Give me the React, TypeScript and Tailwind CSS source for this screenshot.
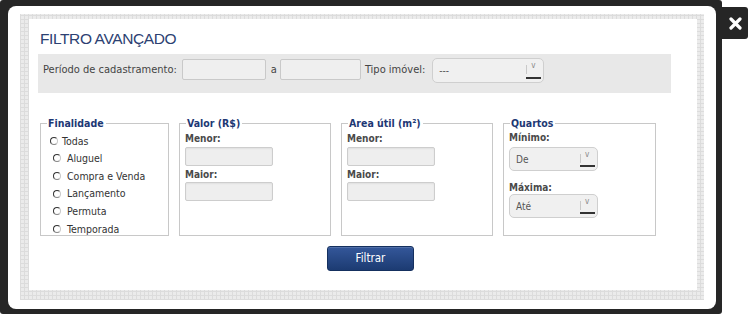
import React from "react";

const F = "font-['DejaVu_Sans_Condensed','DejaVu_Sans',sans-serif]";

function Input({ w }: { w: string }) {
  return (
    <div
      className={`${w} h-[19px] bg-[#eeeeee] border border-[#cdcdcd] rounded-[2px] shadow-[inset_0_1px_2px_rgba(0,0,0,0.06)]`}
    />
  );
}

function Select({ label, w, h }: { label: string; w: string; h: string }) {
  return (
    <div
      className={`${w} ${h} relative bg-[#f0f0f0] border border-[#cfcfcf] rounded-[5px] flex items-center pl-[6px] text-[10px] text-[#555] ${F}`}
    >
      <span>{label}</span>
      <div className="absolute right-[2px] top-0 bottom-0 w-[15px]">
        <span className="absolute left-[0px] top-[6px] h-[9px] w-px bg-[#c9c9c9]" />
        <span className="absolute left-[5px] top-[3px] text-[8px] text-[#888] leading-none">v</span>
        <span className="absolute left-0 right-0 bottom-[3px] h-[2px] bg-[#333]" />
      </div>
    </div>
  );
}

function Radio({ label, first }: { label: string; first?: boolean }) {
  return (
    <div className={`h-[17.6px] flex items-center ${first ? "pl-[9px] gap-[4px]" : "pl-[12px] gap-[6px]"}`}>
      <span className="w-[8px] h-[8px] rounded-full border border-t-[#333] border-l-[#333] border-r-[#c8c8c8] border-b-[#888] bg-white shrink-0" />
      <span className="text-[10.5px] text-[#333] leading-none">{label}</span>
    </div>
  );
}

function Fieldset({ legend, w, children }: { legend: string; w: string; children: React.ReactNode }) {
  return (
    <fieldset className={`${w} h-[120px] border border-[#c8c8c8] px-[5px] pb-[2px] m-0`}>
      <legend className="ml-[1px] pr-[2px] pl-[1px] text-[10.5px] leading-[14px] font-bold text-[#1d3874]">
        {legend}
      </legend>
      {children}
    </fieldset>
  );
}

function Label({ children, cls }: { children: React.ReactNode; cls?: string }) {
  return <div className={`text-[10px] font-bold text-[#4a4a4a] leading-[12px] ${cls ?? ""}`}>{children}</div>;
}

export default function App() {
  return (
    <div className={`relative w-[750px] h-[320px] bg-white ${F}`}>
      {/* frame */}
      <div className="w-[722px] h-[314px] bg-[#262626] rounded-[3px] pt-[6px] pl-[8px] pr-[6px] pb-[5px]">
        <div className="w-full h-full bg-white rounded-[8px] pt-[8px] pl-[12px]">
          <div className="w-[684px] h-[286px] bg-[#ebebeb] bg-[repeating-linear-gradient(90deg,#dcdcdc_0_1px,transparent_1px_4px),repeating-linear-gradient(0deg,#dcdcdc_0_1px,transparent_1px_4px)] pl-[9px] pt-[5px]">
            <div className="w-[668px] h-[271px] bg-white flex flex-col">
              {/* title */}
              <div className="mt-[10px] ml-[11px] h-[20px] leading-[20px] text-[15.5px] tracking-[-0.4px] text-[#2c4172] font-['Liberation_Sans',Arial,sans-serif]">
                FILTRO AVANÇADO
              </div>
              {/* gray bar */}
              <div className="mt-[5px] ml-[9px] w-[633px] h-[39px] bg-[#e8e8e8] pt-[4px] pl-[5px]">
                <div className="h-[25px] flex items-center text-[11px] text-[#444]">
                  <span>Período de cadastramento:</span>
                  <div className="ml-[5px] w-[84px] h-[21px] bg-[#efefef] border border-[#c9c9c9] rounded-[2px] -mt-[3px]" />
                  <span className="ml-[5px] mr-[3px]">a</span>
                  <div className="w-[81px] h-[21px] bg-[#efefef] border border-[#c9c9c9] rounded-[2px] -mt-[3px]" />
                  <span className="ml-[4px]">Tipo imóvel:</span>
                  <div className="ml-[7px]">
                    <Select label="---" w="w-[112px]" h="h-[25px]" />
                  </div>
                </div>
              </div>
              {/* fieldsets */}
              <div className="mt-[23px] ml-[11px] flex gap-[10px]">
                <Fieldset legend="Finalidade" w="w-[129px]">
                  <div className="-mx-[5px] pt-[2px]">
                    <Radio label="Todas" first />
                    <Radio label="Aluguel" />
                    <Radio label="Compra e Venda" />
                    <Radio label="Lançamento" />
                    <Radio label="Permuta" />
                    <Radio label="Temporada" />
                  </div>
                </Fieldset>
                <Fieldset legend="Valor (R$)" w="w-[152px]">
                  <Label cls="mt-[3px]">Menor:</Label>
                  <div className="mt-[2px]"><Input w="w-[88px]" /></div>
                  <Label cls="mt-[3px]">Maior:</Label>
                  <div className="mt-[1px]"><Input w="w-[88px]" /></div>
                </Fieldset>
                <Fieldset legend="Area útil (m²)" w="w-[152px]">
                  <Label cls="mt-[3px]">Menor:</Label>
                  <div className="mt-[2px]"><Input w="w-[88px]" /></div>
                  <Label cls="mt-[3px]">Maior:</Label>
                  <div className="mt-[1px]"><Input w="w-[88px]" /></div>
                </Fieldset>
                <Fieldset legend="Quartos" w="w-[153px]">
                  <Label cls="mt-[2px]">Mínimo:</Label>
                  <div className="mt-[3px]"><Select label="De" w="w-[89px]" h="h-[24px]" /></div>
                  <Label cls="mt-[11px]">Máxima:</Label>
                  <div className="mt-[0px]"><Select label="Até" w="w-[89px]" h="h-[24px]" /></div>
                </Fieldset>
              </div>
              {/* button */}
              <div className="mt-[10px] ml-[298px]">
                <button className="w-[87px] h-[25px] rounded-[3px] border border-[#15305f] bg-[linear-gradient(#34579a,#1c3b72)] text-white text-[11.5px] flex items-center justify-center shadow-[inset_0_1px_0_rgba(255,255,255,0.15)]">
                  Filtrar
                </button>
              </div>
            </div>
          </div>
        </div>
      </div>
      {/* close button */}
      <div className="absolute left-[722px] top-[7px] w-[26px] h-[32px] bg-[#262626] rounded-r-[3px] flex items-center justify-center">
        <svg width="13" height="13" viewBox="0 0 13 13">
          <path d="M2 2 L11 11 M11 2 L2 11" stroke="white" strokeWidth="3.2" strokeLinecap="round" />
        </svg>
      </div>
    </div>
  );
}
